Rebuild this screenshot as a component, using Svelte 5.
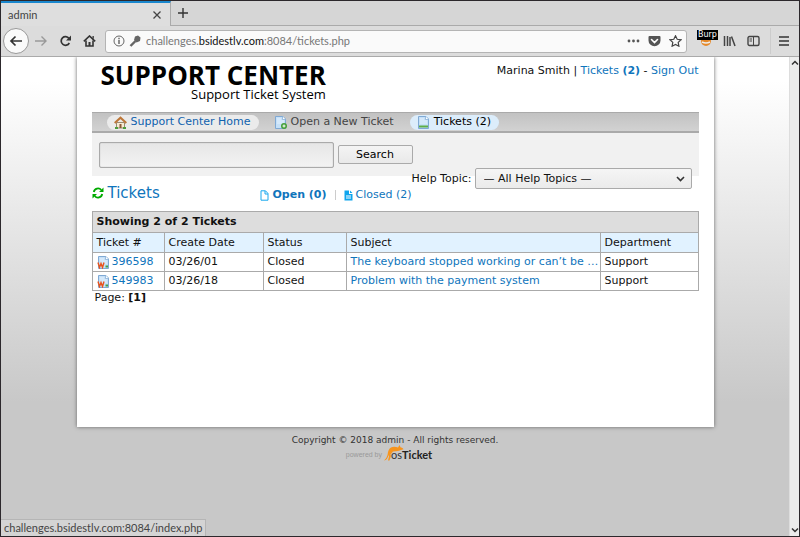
<script>
  const headings = ['Ticket #', 'Create Date', 'Status', 'Subject', 'Department'];
  const tickets = [
    { id: '396598', date: '03/26/01', status: 'Closed', subject: 'The keyboard stopped working or can’t be …', dept: 'Support' },
    { id: '549983', date: '03/26/18', status: 'Closed', subject: 'Problem with the payment system', dept: 'Support' }
  ];
  let query = $state('');
</script>

{#snippet page(kind)}
  <svg class="page-icon" width="13" height="13" viewBox="0 0 13 13" aria-hidden="true">
    <path d="M1.500.5h7.500l2.500 2.500v9.500h-10z" fill="#c5e0f8" stroke="#7fa9d4" />
    <path d="M3 3h4M3 5h7M3 7h7" stroke="#e4f1fd" />
    <path d="M8.500.5v3h3" fill="#fff" stroke="#7fa9d4" stroke-width=".7" />
    {#if kind === 'new'}
      <circle cx="10" cy="10" r="3" fill="#46a03a" />
      <path d="M8.500 10h3M10 8.500v3" stroke="#fff" />
    {:else if kind === 'list'}
      <path d="M2 10.500h9" stroke="#5eae48" stroke-width="2" />
    {:else}
      <path d="M1 6.500l1.500 5 1.500-4 1.500 4 1.500-5" fill="none" stroke="#e8541e" stroke-width="1.400" />
      <path d="M8.500 10.500h2.500" stroke="#43a047" stroke-width="2" />
    {/if}
  </svg>
{/snippet}

<div class="window">
  <div class="tabs">
    <div class="tab">
      <span>admin</span>
      <button aria-label="Close tab"><svg width="10" height="10" viewBox="0 0 10 10"><path d="M1.500 1.500l7 7M8.500 1.500l-7 7" stroke="#444" stroke-width="1.300" /></svg></button>
    </div>
    <button class="add" aria-label="New tab"><svg width="12" height="12" viewBox="0 0 12 12"><path d="M6 1v10M1 6h10" stroke="#333" stroke-width="1.400" /></svg></button>
  </div>

  <div class="toolbar">
    <button class="back" aria-label="Back"><svg width="14" height="12" viewBox="0 0 14 12"><path d="M13 6H2M6.500 1.500L2 6l4.500 4.500" fill="none" stroke="#333" stroke-width="1.700" /></svg></button>
    <button aria-label="Forward"><svg width="14" height="12" viewBox="0 0 14 12"><path d="M1 6h11M7.500 1.500L12 6l-4.500 4.500" fill="none" stroke="#999" stroke-width="1.400" /></svg></button>
    <button aria-label="Reload"><svg width="13" height="12" viewBox="0 0 13 12"><path d="M10 3.500A4.300 4.300 0 1 0 10.300 8" fill="none" stroke="#333" stroke-width="1.700" /><path d="M12 .5v5H7z" fill="#333" /></svg></button>
    <button aria-label="Home"><svg width="13" height="12" viewBox="0 0 13 12"><path d="M.8 6.300L6.500 1l5.700 5.300" fill="none" stroke="#333" stroke-width="1.600" /><path d="M3 5.500V11h7V5.500" fill="none" stroke="#333" stroke-width="1.600" /><path d="M5.500 7h2v4h-2zM9.500 1h1.300v3l-1.300-1z" fill="#333" /></svg></button>
    <div class="url">
      <svg width="12" height="12" viewBox="0 0 12 12"><circle cx="6" cy="6" r="5" fill="none" stroke="#666" /><path d="M6 5v4M6 2.800v1.400" stroke="#555" stroke-width="1.300" /></svg>
      <svg width="12" height="12" viewBox="0 0 12 12"><path d="M6.500 6L1.500 11" stroke="#666" stroke-width="2.400" /><path d="M6 1.500L9 .5l2.500 2-.5 3.500-3.500 1.500L5 5z" fill="#666" /></svg>
      <span class="address">challenges.<b>bsidestlv.com</b>:8084/tickets.php</span>
      <svg width="13" height="12" viewBox="0 0 13 12"><g fill="#555"><circle cx="2" cy="6" r="1.400" /><circle cx="6.500" cy="6" r="1.400" /><circle cx="11" cy="6" r="1.400" /></g></svg>
      <svg width="13" height="12" viewBox="0 0 13 12"><path d="M1.500 1h10q1 0 1 1v3.500a6 5.800 0 0 1-12 0V2q0-1 1-1z" fill="#555" /><path d="M3.500 4.500l3 3 3-3" fill="none" stroke="#fff" stroke-width="1.600" stroke-linecap="round" /></svg>
      <svg width="13" height="12" viewBox="0 0 13 12"><path d="M6.500.8l1.700 3.500 3.800.5-2.800 2.600.7 3.800-3.400-1.800-3.400 1.800.7-3.800L1 4.800l3.800-.5z" fill="none" stroke="#444" stroke-width="1.200" /></svg>
    </div>
    <div class="burp">
      <svg width="12" height="12" viewBox="0 0 12 12"><circle cx="6" cy="6" r="5" fill="#e58a2c" /><path d="M2 7q4 2 8 0" stroke="#eee" stroke-width="1.500" fill="none" /></svg>
      <span>Burp</span>
    </div>
    <button class="tool" aria-label="Library"><svg width="13" height="12" viewBox="0 0 13 12"><path d="M1.500 1v10M4.500 1v10M7 2v9M8.500 1.500l3.500 9.500" stroke="#444" stroke-width="1.500" fill="none" /></svg></button>
    <button class="tool" aria-label="Sidebar"><svg width="13" height="12" viewBox="0 0 13 12"><rect x="1" y="1.500" width="11" height="9" rx="1.500" fill="none" stroke="#444" stroke-width="1.400" /><path d="M6.500 2v8M2.500 4h2.500M2.500 6h2.500" stroke="#444" /></svg></button>
    <button class="menu" aria-label="Menu"><svg width="10" height="12" viewBox="0 0 10 12"><path d="M0 2h10M0 6h10M0 10h10" stroke="#333" stroke-width="1.500" /></svg></button>
  </div>

  <div class="view">
    <div class="canvas">
      <main>
        <header>
          <a class="logo" href="#home"><strong>SUPPORT CENTER</strong><span>Support Ticket System</span></a>
          <p>Marina Smith | <a href="#tickets">Tickets <b>(2)</b></a> - <a href="#out">Sign Out</a></p>
        </header>
        <nav>
          <a class="home" href="#home">
            <svg width="13" height="13" viewBox="0 0 13 13"><path d="M2.500 6.500h8V12h-8z" fill="#f7ead2" stroke="#9a8a72" /><path d="M.7 7L6.500 1.700 12.300 7" fill="none" stroke="#bd7637" stroke-width="2" /><path d="M5.500 8h2v4h-2z" fill="#8b5a35" /><path d="M1 12h3M9 12h3" stroke="#4d9d3b" stroke-width="2" /></svg>Support Center Home</a>
          <a href="#new">{@render page('new')}Open a New Ticket</a>
          <a class="active" href="#tickets">{@render page('list')}Tickets (2)</a>
        </nav>
        <form class="search" onsubmit={(e) => e.preventDefault()}>
          <input type="text" aria-label="Search tickets" bind:value={query} />
          <button type="submit">Search</button>
        </form>
        <div class="filters">
          <h1><a href="#refresh"><svg width="12" height="12" viewBox="0 0 12 12"><path d="M1.800 5A4.300 4.300 0 0 1 9.300 3M10.200 7A4.300 4.300 0 0 1 2.700 9" fill="none" stroke="#0a0" stroke-width="1.800" /><path d="M11.500.5v4.500H7zM.5 11.500V7H5z" fill="#0a0" /></svg>Tickets</a></h1>
          <div class="states">
            <a href="#open"><svg width="9" height="11" viewBox="0 0 9 11"><path d="M1 .8h4.500L8 3.500v6.700H1zM5 1v3h3" fill="none" stroke="#18a8ee" /></svg><b>Open (0)</b></a>
            <i></i>
            <a href="#closed"><svg width="9" height="11" viewBox="0 0 9 11"><path d="M.5.500h4.500v3.500h3.500v6.500h-8zM6 .5L8.500 3H6z" fill="#0ea5ee" /><path d="M2 6h5M2 8h5" stroke="#fff" /></svg>Closed (2)</a>
          </div>
          <div class="topic">
            <label for="topic">Help Topic:</label>
            <span class="pick">
              <select id="topic"><option>— All Help Topics —</option></select>
              <svg width="9" height="6" viewBox="0 0 9 6"><path d="M1 1l3.500 3.500L8 1" fill="none" stroke="#333" stroke-width="1.600" /></svg>
            </span>
          </div>
        </div>
        <table>
          <caption>Showing 2 of 2 Tickets</caption>
          <colgroup><col class="c1" /><col class="c2" /><col class="c3" /><col class="c4" /><col class="c5" /></colgroup>
          <thead><tr>{#each headings as h}<th>{h}</th>{/each}</tr></thead>
          <tbody>
            {#each tickets as t}
              <tr>
                <td><a class="number" href="#{t.id}">{@render page('web')}{t.id}</a></td>
                <td>{t.date}</td>
                <td>{t.status}</td>
                <td><a href="#{t.id}">{t.subject}</a></td>
                <td>{t.dept}</td>
              </tr>
            {/each}
          </tbody>
        </table>
        <p class="pages">Page: <b>[1]</b></p>
      </main>
      <footer>
        <p>Copyright © 2018 admin - All rights reserved.</p>
        <a href="#osticket">
          <span>powered by</span>
          <svg width="20" height="16" viewBox="0 0 20 16"><path d="M0 15.500Q2.500 14 3.500 10Q4 4 7 2.500Q10 1 14 2.500L15.500 0l1 2.200Q19 2.500 19.500 4.300L17 5l-2 .7Q12 6.500 9 6.500L6.500 9.500l.5 1.500-1.500 4.500H4l1-4-.5-1.500Q3.500 15 0 15.500z" fill="#f7941d" /></svg>
          <span class="os">os</span><b>Ticket</b>
        </a>
      </footer>
      <div class="status">challenges.bsidestlv.com:8084/index.php</div>
    </div>
    <div class="scroll">
      <svg width="8" height="6" viewBox="0 0 8 6"><path d="M1 4.500l3-3 3 3" fill="none" stroke="#333" stroke-width="1.500" /></svg>
      <svg width="8" height="6" viewBox="0 0 8 6"><path d="M1 1.500l3 3 3-3" fill="none" stroke="#333" stroke-width="1.500" /></svg>
    </div>
  </div>
</div>

<style>
  * { box-sizing: border-box; }
  p, h1 { margin: 0; }
  button { border: 0; padding: 0; background: none; font: inherit; }
  svg { display: block; flex: none; }
  a { color: #0f75bc; text-decoration: none; }
  .window { display: flex; flex-direction: column; height: 100vh; min-height: 500px; border: 1px solid #2c282c; font: 11px/16px "DejaVu Sans", sans-serif; color: #111; background: #dcdcdc; }
  .tabs { display: flex; height: 25px; background: #d6d6d6; border-bottom: 1px solid #aaa; font-family: Lato, sans-serif; color: #444; }
  .tab { display: flex; align-items: center; justify-content: space-between; width: 170px; height: 25px; padding: 0 8px 0 7px; border-top: 2px solid #1a87cd; border-right: 1px solid #aaa; background: #dedede; }
  .add { padding: 0 6px; }
  .toolbar { display: flex; align-items: center; height: 31px; padding: 0 10px 0 2px; border-bottom: 1px solid #aaa; font-family: Lato, sans-serif; }
  .toolbar > button { display: grid; place-items: center; width: 24px; height: 26px; }
  .toolbar > .back { width: 26px; border: 1px solid #999; border-radius: 50%; background: #fafafa; }
  .url { display: flex; flex: 1; align-items: center; gap: 4px; height: 23px; margin: 0 8px 0 4px; padding: 0 2px 0 7px; border: 1px solid #b4b4b4; border-radius: 3px; background: #fafafa; }
  .url svg:nth-of-type(n + 3) { margin-right: 2px; margin-left: 2px; }
  .address { flex: 1; margin-left: 1px; color: #777; white-space: nowrap; }
  .address b { font-weight: 400; color: #111; }
  .burp { position: relative; display: grid; place-items: center; width: 22px; }
  .burp span { position: absolute; left: 2px; top: -5px; padding: 0 1px; background: #000; color: #fff; font: 8px/10px "DejaVu Sans", sans-serif; }
  .toolbar > .menu { width: 19px; justify-items: end; margin-left: 5px; border-left: 1px solid #ccc; }
  .view { display: flex; flex: 1; min-height: 0; }
  .canvas { position: relative; flex: 1; overflow: hidden; background: #c8c8c8 linear-gradient(#fff 24px, #c8c8c8) no-repeat 0 0 / 100% 345px; }
  .scroll { display: flex; flex-direction: column; justify-content: space-between; align-items: center; width: 10px; padding: 3px 0; border-left: 1px solid #ddd; background: #ececec; }
  main { max-width: 637px; min-height: 370px; margin: 0 auto; padding: 0 15px; background: #fff; box-shadow: 0 0 4px #666; }
  header { display: flex; justify-content: space-between; height: 55px; padding-top: 6px; }
  .logo { display: flex; flex-direction: column; align-items: flex-end; margin-left: 9px; color: #000; font: 13px/14px "Open Sans", sans-serif; }
  .logo strong { font-size: 26px; line-height: 24px; font-weight: 700; }
  nav { display: flex; align-items: center; gap: 8px; height: 21px; padding-left: 15px; background: linear-gradient(#c2c2c2, #d2d2d2); border-top: 1px solid #aaa; border-bottom: 2px solid #aaa; }
  nav a { display: flex; align-items: center; gap: 4px; height: 15px; padding: 0 8px 0 7px; border-radius: 8px; color: #444; }
  nav .home { color: #0f62ae; background: #ebebeb; }
  nav .active { color: #000; background: #dcedfb; }
  .search { display: flex; align-items: center; gap: 4px; height: 43px; padding-left: 7px; background: #f1f1f1; }
  .search input { width: 235px; height: 26px; border: 1px solid #aaa; border-radius: 2px; background: linear-gradient(#e6e6e6, #f3f3f3); font: inherit; box-shadow: inset 0 0 1px #999; }
  .search button { width: 75px; height: 19px; border: 1px solid #aaa; border-radius: 2px; background: linear-gradient(#f4f4f4, #e9e9e9); }
  .filters { display: flex; align-items: flex-end; height: 43px; margin-top: -8px; padding-bottom: 8px; white-space: nowrap; }
  h1 { width: 169px; font-size: 15px; line-height: 20px; font-weight: 400; }
  h1 a, .states, .states a { display: flex; align-items: center; gap: 4px; }
  .states { gap: 8px; }
  .states a { gap: 3px; }
  .states i { width: 1px; height: 10px; background: #ccc; }
  .topic { display: flex; align-items: center; align-self: flex-start; gap: 3px; margin: 0 7px 0 auto; }
  .pick { position: relative; }
  select { display: block; appearance: none; width: 217px; height: 21px; padding: 0 20px 0 8px; border: 1px solid #aaa; border-radius: 2px; background: linear-gradient(#f5f5f5, #ebebeb); color: #111; font: inherit; }
  .pick svg { position: absolute; right: 7px; top: 8px; pointer-events: none; }
  table { width: 100%; table-layout: fixed; border-collapse: collapse; }
  caption { height: 21px; padding: 0 4px; border: 1px solid #aaa; border-bottom: 0; background: #ddd; font-weight: 700; line-height: 20px; text-align: left; }
  th, td { height: 19px; padding: 0 4px; border: 1px solid #aaa; text-align: left; white-space: nowrap; }
  th { height: 20px; background: #e1f2ff; font-weight: 400; }
  .c1 { width: 72px; } .c2 { width: 99px; } .c3 { width: 83px; } .c5 { width: 98px; }
  .number { display: flex; align-items: center; gap: 2px; }
  .pages { padding-left: 3px; line-height: 14px; }
  footer { display: flex; flex-direction: column; align-items: center; padding-top: 6px; color: #333; font-size: 9px; line-height: 14px; }
  footer a { display: flex; align-items: flex-end; margin-top: -2px; padding-right: 12px; color: #999; font: 7px/12px "Liberation Sans", sans-serif; }
  footer svg { margin: 0 -13px 0 2px; }
  footer .os { position: relative; color: #333; font: 11px/12px Lato, sans-serif; }
  footer b { position: relative; color: #222; font: 700 11px/12px Lato, sans-serif; }
  .status { position: absolute; left: 0; bottom: 0; padding: 0 3px; border: 1px solid #b5b5b5; border-width: 1px 1px 0 0; background: #d4d4d4; color: #444; font-family: Lato, sans-serif; }
</style>
